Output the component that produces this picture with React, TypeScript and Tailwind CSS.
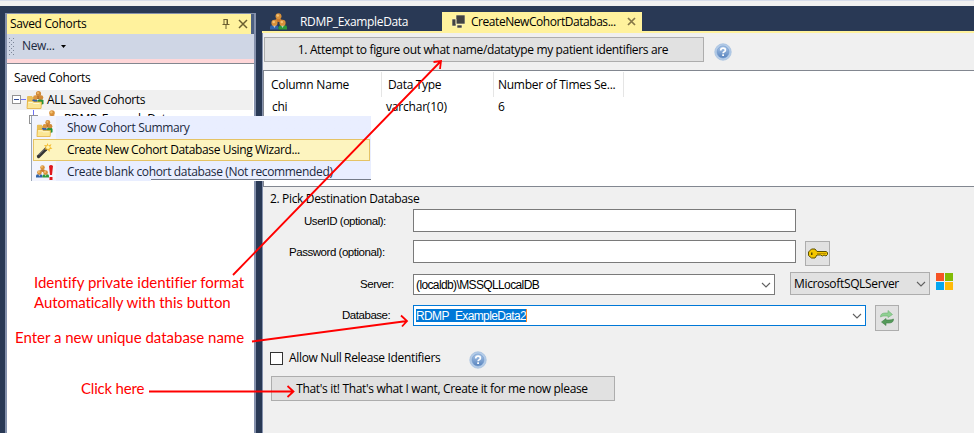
import type { ReactNode } from "react";

const ui = "font-['Open_Sans','Noto_Sans',sans-serif] text-[12px] leading-[16px] tracking-[-0.34px] whitespace-nowrap";
const sans = "font-['Liberation_Sans',sans-serif] text-[11.5px] leading-[16px] tracking-[-0.46px] whitespace-nowrap";
const value = "font-['Liberation_Sans',sans-serif] text-[12px] leading-[16px] tracking-[-0.62px] whitespace-nowrap";
const note = "font-['Lato',sans-serif] text-[15px] leading-[20px] tracking-[-0.01px] whitespace-nowrap text-[#ff0000]";

function People({ size = 16 }: { size?: number }) {
  return (
    <svg width={size} height={size} viewBox="0 0 16 16" className="shrink-0">
      <path d="M5 8V7q0-2 3-2t3 2v2z" fill="#c8792b" />
      <path d="M0 15.500v-2q0-2 2-2h3.500q2.500 0 2.500 2v2z" fill="#2f62a8" />
      <path d="M8 15.500v-2q0-2 2.500-2H14q2 0 2 2v2z" fill="#2c9a38" />
      <circle cx="8" cy="3" r="2.800" fill="#d8913b" />
      <circle cx="4.200" cy="9.300" r="2.900" fill="#d8913b" />
      <circle cx="11.800" cy="9.300" r="2.900" fill="#d8913b" />
      <circle cx="7.300" cy="2.300" r="1.200" fill="#f2c274" />
      <circle cx="3.500" cy="8.500" r="1.200" fill="#f2c274" />
      <circle cx="11.100" cy="8.500" r="1.200" fill="#f2c274" />
      <path d="M3 12l1.200 2 1.200-2zM10.600 12l1.200 2 1.200-2z" fill="#e8edf4" opacity=".7" />
    </svg>
  );
}

function FolderPeople({ size = 18 }: { size?: number }) {
  return (
    <svg width={size} height={size} viewBox="0 0 18 18" className="shrink-0">
      <path d="M1 6q0-1 1-1h4l1 1.500h4V16H1z" fill="#e9bf58" />
      <path d="M9.500 6q1-2 3-2t3 2v2h-6z" fill="#b86f2a" />
      <circle cx="12.500" cy="2.700" r="2.600" fill="#d18a38" />
      <circle cx="12" cy="2" r="1.100" fill="#efb968" />
      <path d="M6 12V9.500Q6.500 8 8.500 8T11.500 9.500V12z" fill="#315fa5" />
      <path d="M11.500 15V9.500q.5-1.500 3-1.500t3 1.500V13z" fill="#278f38" />
      <circle cx="9.300" cy="6.500" r="2.200" fill="#dc963f" />
      <circle cx="15" cy="6.500" r="2.300" fill="#d18a38" />
      <path d="M1.500 10h5l1.500 1h7.500L15 17.500H1z" fill="#fbe694" stroke="#e3ae3c" strokeWidth=".8" />
      <path d="M2.500 11.500h4l1 1h6" stroke="#fff8d0" fill="none" />
    </svg>
  );
}

function Wand() {
  return (
    <svg width="17" height="17" viewBox="0 0 17 17">
      <path d="M2.500 14.500L10 7" stroke="#343434" strokeWidth="3.200" strokeLinecap="round" />
      <path d="M2.500 13L9 6.500" stroke="#999" strokeWidth=".8" />
      <path d="M11.500 1l1 2.500L15.500 2l-1.300 3 2.300 1.500-2.700.7-.3 2.800-1.800-2.200L9 7.500 9.700 5 8 3l2.700.2z" fill="#f4bd32" />
      <circle cx="12" cy="5.300" r="1.700" fill="#fff4b0" />
    </svg>
  );
}

function Help() {
  return (
    <svg width="18" height="18" viewBox="0 0 18 18" className="shrink-0">
      <defs>
        <linearGradient id="helpBlue" x1="0" y1="0" x2="0" y2="1">
          <stop stopColor="#a9c6e8" />
          <stop offset="1" stopColor="#5883bd" />
        </linearGradient>
      </defs>
      <circle cx="9" cy="9" r="8.200" fill="#b5cce8" stroke="#a5c0e0" strokeWidth=".8" />
      <circle cx="9" cy="9" r="6" fill="url(#helpBlue)" stroke="#7199cb" strokeWidth=".6" />
      <path d="M6.700 7.500Q6.800 5.200 9.100 5.200t2.300 2q0 1-1.200 1.600Q9.100 9.300 9.100 10.300" fill="none" stroke="#fff" strokeWidth="1.700" />
      <rect x="8.200" y="11.300" width="1.800" height="1.700" fill="#fff" />
    </svg>
  );
}

function Chevron() {
  return (
    <svg width="10" height="6" viewBox="0 0 10 6" className="shrink-0">
      <path d="M1 1l4 4 4-4" fill="none" stroke="#606060" strokeWidth="1.100" />
    </svg>
  );
}

function MenuItem({ icon, children, active = false }: { icon: ReactNode; children: ReactNode; active?: boolean }) {
  return (
    <div className={`flex h-[22px] items-center ${active ? "border border-[#e5c365] bg-[#fdf4bf] text-black" : "border border-transparent text-[#1b293e]"}`}>
      <div className="flex w-[33px] shrink-0 justify-start pl-[2px]">{icon}</div>
      {children}
    </div>
  );
}

function SavedCohorts() {
  return (
    <aside className="mt-[7px] flex w-[251px] shrink-0 flex-col border-x-2 border-t border-[#8591ac] bg-white">
      <div className="flex h-[20px] shrink-0 items-center border-r-[3px] border-[#4d6082] bg-[#fff29d] pl-[3px]">
        <span className={`${ui} grow`}>Saved Cohorts</span>
        <svg width="8" height="12" viewBox="0 0 8 12" className="mr-[8px]">
          <path d="M1.500 1.500h4v5M2 1.500v5M5 1.500v5M.5 6.500h7M4 7v4" fill="none" stroke="#6b5f30" />
        </svg>
        <svg width="10" height="10" viewBox="0 0 10 10" className="mr-[3px]">
          <path d="M1 1l8 8M9 1L1 9" stroke="#6b5f30" strokeWidth="1.500" />
        </svg>
      </div>
      <div className="flex h-[25px] shrink-0 items-center bg-[#cfd6e5] pl-[2px] text-[#1b293e]">
        <svg width="6" height="18" viewBox="0 0 6 18">
          {[0, 4, 8, 12, 16].map((y) => (
            <g key={y} fill="#7d8799">
              <rect x="0" y={y} width="1" height="1" />
              <rect x="4" y={y} width="1" height="1" />
              <rect x="2" y={y + 2} width="1" height="1" />
            </g>
          ))}
        </svg>
        <span className={`${ui} -mt-px ml-[7px]`}>New...</span>
        <svg width="5" height="3" viewBox="0 0 5 3" className="ml-[6px]"><path d="M0 0h5L2.500 3z" /></svg>
      </div>
      <div className="h-[4px] shrink-0 bg-[#ffd7d9]" />
      <div className="flex grow flex-col border-t border-[#828790]">
        <div className={`${ui} mt-[6px] h-[20px] pl-[7px]`}>Saved Cohorts</div>
        <div className="mx-px flex h-[20px] items-center bg-[#f0f0f0] pl-[4px]">
          <svg width="14" height="20" viewBox="0 0 14 20">
            <rect x=".5" y="5.500" width="8" height="8" fill="#fff" stroke="#929292" />
            <path d="M2 9.500h5" stroke="#334f9b" /><path d="M9 9.500h5" stroke="#6d70f2" />
          </svg>
          <FolderPeople />
          <span className={`${ui} ml-[3px]`}>ALL Saved Cohorts</span>
        </div>
        <div className="flex h-[20px] items-start pl-[21px]">
          <svg width="16" height="20" viewBox="0 0 16 20" className="shrink-0"><path d="M5.500 0v5" stroke="#6d70f2" /><rect x="1.500" y="5.500" width="8" height="8" fill="#fff" stroke="#929292" /></svg>
          <People />
          <span className={`${ui} ml-[4px] mt-px`}>RDMP_ExampleData</span>
        </div>
      </div>
    </aside>
  );
}

function ContextMenu() {
  return (
    <div className={`${ui} absolute left-[31px] top-[116px] h-[65px] w-[340px] border-l border-[#9ba7b7] bg-[#eaf0ff]`}>
      <div className="h-full bg-linear-to-r from-[#f2f4fe] from-[24px] to-[#e9eeff] to-[24px] px-px pt-px">
        <MenuItem icon={<FolderPeople size={17} />}>Show Cohort Summary</MenuItem>
        <MenuItem active icon={<Wand />}><span className="tracking-[-0.37px]">Create New Cohort Database Using Wizard...</span></MenuItem>
        <MenuItem icon={
          <span className="flex"><People size={13} /><svg width="4" height="15" viewBox="0 0 4 15"><path d="M0 1q2-2 4 0L3 10H1zM.5 12h3v3h-3z" fill="#df171d" /></svg></span>
        }>Create blank cohort database (Not recommended)</MenuItem>
      </div>
      <div className="absolute bottom-0 right-0 h-[2px] w-[220px] border-t border-[#747b88] bg-white" />
    </div>
  );
}

function Tabs() {
  return (
    <div className="flex h-[27px] shrink-0 border-b-2 border-[#fff29d] pt-[6px]">
      <div className="flex w-[180px] items-center pl-[8px] text-white">
        <People size={17} />
        <span className={`${ui} ml-[13px] tracking-[-0.4px]`}>RDMP_ExampleData</span>
      </div>
      <div className="flex w-[200px] items-center bg-[#fff29d] pl-[10px]">
        <svg width="13" height="13" viewBox="0 0 13 13">
          <path d="M4 0h9v9H4zM0 4h4v7H0zM5 10h5v3H5z" fill="#424242" stroke="#fff7c6" strokeWidth=".6" />
        </svg>
        <span className="ml-[6px] whitespace-nowrap font-['Open_Sans','Noto_Sans',sans-serif] text-[12px] leading-[16px] tracking-[-0.45px]">CreateNewCohortDatabas...</span>
        <svg width="9" height="9" viewBox="0 0 9 9" className="ml-auto mr-[6px]"><path d="M1 1l7 7M8 1L1 8" stroke="#857747" strokeWidth="1.700" /></svg>
      </div>
    </div>
  );
}

function Results() {
  return (
    <div className={`${ui} h-[117px] shrink-0 border-y border-l border-[#828790] bg-white`}>
      <div className="flex h-[26px] items-end">
        <div className="flex h-[25px] w-[118px] items-center border-r border-[#e5e5e5] pl-[7px]"><span className="tracking-[-0.2px]">Column Name</span></div>
        <div className="flex h-[25px] w-[112px] items-center border-r border-[#e5e5e5] pl-[6px]">Data Type</div>
        <div className="flex h-[25px] w-[130px] items-center border-r border-[#e5e5e5] pl-[4px]"><span className="tracking-[-0.27px]">Number of Times Se...</span></div>
      </div>
      <div className="mt-px flex h-[18px] items-center">
        <span className="w-[114px] pl-[8px]">chi</span>
        <span className="w-[120px] pl-[8px] tracking-[-0.2px]">varchar(10)</span>
        <span>6</span>
      </div>
    </div>
  );
}

function Destination() {
  return (
    <div className="-ml-px flex flex-col items-start">
      <div className={`${ui} mt-[4px] h-[18px] pl-[8px]`}>2. Pick Destination Database</div>
      <div className="flex h-[23px] items-center">
        <label className={`${sans} w-[151px] pl-[42px]`}>UserID (optional):</label>
        <div className="h-[23px] w-[383px] border border-[#7a7a7a] bg-white" />
      </div>
      <div className="mt-[8px] flex h-[26px] items-start">
        <label className={`${sans} mt-[4px] w-[151px] pl-[27px]`}>Password (optional):</label>
        <div className="h-[23px] w-[383px] border border-[#7a7a7a] bg-white" />
        <div className="ml-[9px] mt-px flex size-[25px] items-center justify-center border border-[#adadad] bg-[#e1e1e1]">
          <svg width="20" height="12" viewBox="0 0 20 12">
            <path d="M.5 4l3-3h3.500l2 2.500h9l1.500 1v2l-1.500 1.500-2-1-1.500 1-2-1H9l-2 3H3.500l-3-2.500z" fill="#f3c600" stroke="#5d5100" />
            <path d="M9 5.500h9" stroke="#bd9100" /><rect x="3" y="4.500" width="1.500" height="2.500" fill="#594c00" />
          </svg>
        </div>
      </div>
      <div className="mt-[6px] flex h-[23px] items-start">
        <label className={`${sans} mt-[4px] w-[151px] pl-[98px]`}>Server:</label>
        <div className="mt-[2px] flex h-[21px] w-[362px] items-center border border-[#7a7a7a] bg-white pl-[2px] pr-[3px]">
          <span className={`${value} grow`}>(localdb)\MSSQLLocalDB</span><Chevron />
        </div>
        <div className="ml-[15px] flex h-[23px] w-[140px] items-center border border-[#adadad] bg-[#e1e1e1] pl-[3px] pr-[3px]">
          <span className={`${ui} grow`}>MicrosoftSQLServer</span><Chevron />
        </div>
        <div className="ml-[6px] mt-px grid size-[17px] grid-cols-2 gap-px">
          <i className="bg-[#f65325]" /><i className="bg-[#81bb06]" /><i className="bg-[#05a6f0]" /><i className="bg-[#ffba08]" />
        </div>
      </div>
      <div className="mt-[10px] flex h-[26px] items-start">
        <label className={`${sans} mt-[2px] w-[151px] pl-[80px]`}>Database:</label>
        <div className="flex h-[21px] w-[453px] items-center border border-[#0078d7] bg-white pl-[2px] pr-[3px]">
          <span className="flex h-[13px] items-center border-r border-[#ff8728] bg-[#0078d7] text-white"><span className={value}>RDMP_ExampleData2</span></span>
          <span className="grow" /><Chevron />
        </div>
        <div className="ml-[9px] flex h-[26px] w-[24px] items-center justify-center border border-[#adadad] bg-[#e1e1e1]">
          <svg width="14" height="16" viewBox="0 0 14 16">
            <path d="M.5 7q0-4 4.500-4h3V.5l4.500 4-4.500 3V6H5Q3 5.500.5 7z" fill="#8fd092" stroke="#6fb173" strokeWidth=".6" />
            <path d="M13.500 9q0 4-4.500 4H6v2.500l-4.500-3.500L6 8.500V10h3q2.500 0 4.500-1z" fill="#559a5a" stroke="#3f7f46" strokeWidth=".6" />
          </svg>
        </div>
      </div>
      <div className="mt-[16px] flex h-[22px] items-center pl-[8px]">
        <div className="size-[13px] border border-[#333] bg-white" />
        <span className={`${ui} ml-[6px] w-[180px]`}>Allow Null Release Identifiers</span>
        <div className="mt-[4px]"><Help /></div>
      </div>
      <button className={`${ui} ml-[9px] mt-[7px] h-[25px] w-[344px] border border-[#adadad] bg-[#e1e1e1] pr-[2px]`}>That's it! That's what I want, Create it for me now please</button>
    </div>
  );
}

function Annotations() {
  return (
    <div className="pointer-events-none absolute inset-0">
      <svg width="974" height="433" className="absolute inset-0" fill="none" stroke="#ff0000" strokeWidth="1.800">
        <path d="M233 275L441 61M433.500 62l7.500-1-1 8" />
        <path d="M252 341.500L407 321M401 315.500l6 5.500-5 5.500" />
        <path d="M149 391.500h144M287.500 386l6 5.500-6 5.500" />
      </svg>
      <div className={`${note} absolute left-[34px] top-[272px]`}>Identify private identifier format<br /><span className="tracking-[-0.06px]">Automatically with this button</span></div>
      <div className={`${note} absolute left-[15px] top-[327px]`}>Enter a new unique database name</div>
      <div className={`${note} absolute left-[81px] top-[378px]`}><span className="tracking-[-0.2px]">Click here</span></div>
    </div>
  );
}

export default function App() {
  return (
    <div className="relative flex h-[433px] w-[974px] flex-col overflow-hidden bg-[#293955] text-black">
      <div className="h-[6px] shrink-0 border-t border-[#d5dbe9] bg-[#f0f0f0]" />
      <div className="flex grow pl-[5px]">
        <SavedCohorts />
        <main className="ml-[6px] flex grow flex-col">
          <Tabs />
          <div className="flex grow flex-col border-l border-[#8591ac] bg-[#f0f0f0]">
            <div className="flex h-[37px] shrink-0 items-start pl-px pt-[4px]">
              <button className={`${ui} h-[25px] w-[440px] border border-[#adadad] bg-[#e1e1e1] pr-[2px]`}>1. Attempt to figure out what name/datatype my patient identifiers are</button>
              <div className="ml-[10px] mt-[6px]"><Help /></div>
            </div>
            <Results />
            <Destination />
          </div>
        </main>
      </div>
      <ContextMenu />
      <Annotations />
    </div>
  );
}
